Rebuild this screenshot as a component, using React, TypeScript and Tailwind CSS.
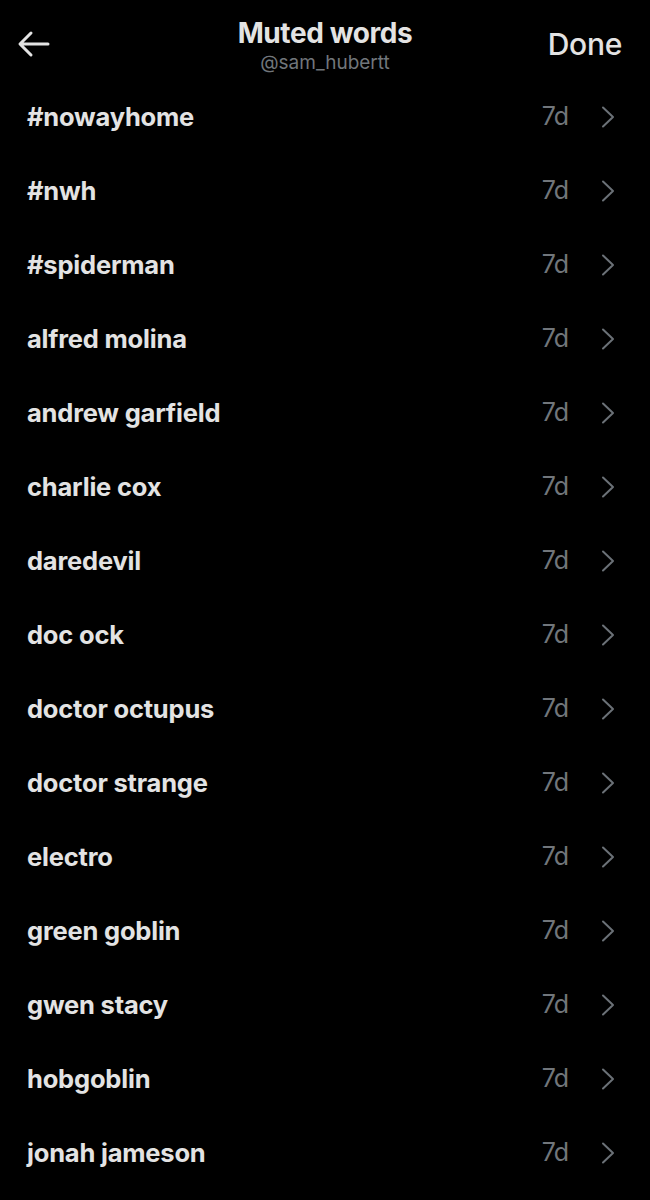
const words = [
  '#nowayhome',
  '#nwh',
  '#spiderman',
  'alfred molina',
  'andrew garfield',
  'charlie cox',
  'daredevil',
  'doc ock',
  'doctor octupus',
  'doctor strange',
  'electro',
  'green goblin',
  'gwen stacy',
  'hobgoblin',
  'jonah jameson',
];

export default function App() {
  return (
    <div className="h-[1200px] w-[650px] overflow-hidden bg-black font-['Inter',sans-serif] text-[#e3e3e3]">
      <header className="relative flex h-[80px] items-start justify-between">
        <button type="button" className="mt-[29px] ml-[17px] text-[#e3e3e3]">
          <svg width="34" height="30" viewBox="0 0 34 30" fill="none" stroke="currentColor" strokeWidth="3" strokeLinecap="round" strokeLinejoin="round">
            <path d="M31 15H4M14 4L3 15l11 11" />
          </svg>
        </button>
        <div className="absolute left-0 right-0 top-[16px] flex flex-col items-center">
          <h1 className="text-[28px] leading-[34px] font-bold tracking-[-0.4px]">Muted words</h1>
          <p className="mt-[1px] text-[19px] leading-[24px] text-[#71767b]">@sam_hubertt</p>
        </div>
        <button type="button" className="mt-[26px] mr-[28px] text-[30px] leading-[36px] font-medium tracking-[-0.3px]">
          Done
        </button>
      </header>

      <ul>
        {words.map((w) => (
          <li key={w} className="flex h-[74px] items-center pl-[27px] pr-[35px]">
            <span className="flex-1 text-[25.5px] font-bold tracking-[-0.2px]">{w}</span>
            <span className="text-[25px] text-[#71767b] tracking-[-1px]">7d</span>
            <svg className="ml-[33px]" width="14" height="22" viewBox="0 0 14 22" fill="none" stroke="#6b7177" strokeWidth="2" strokeLinecap="round" strokeLinejoin="round">
              <path d="M2 1.5L12 11 2 20.5" />
            </svg>
          </li>
        ))}
      </ul>
    </div>
  );
}
